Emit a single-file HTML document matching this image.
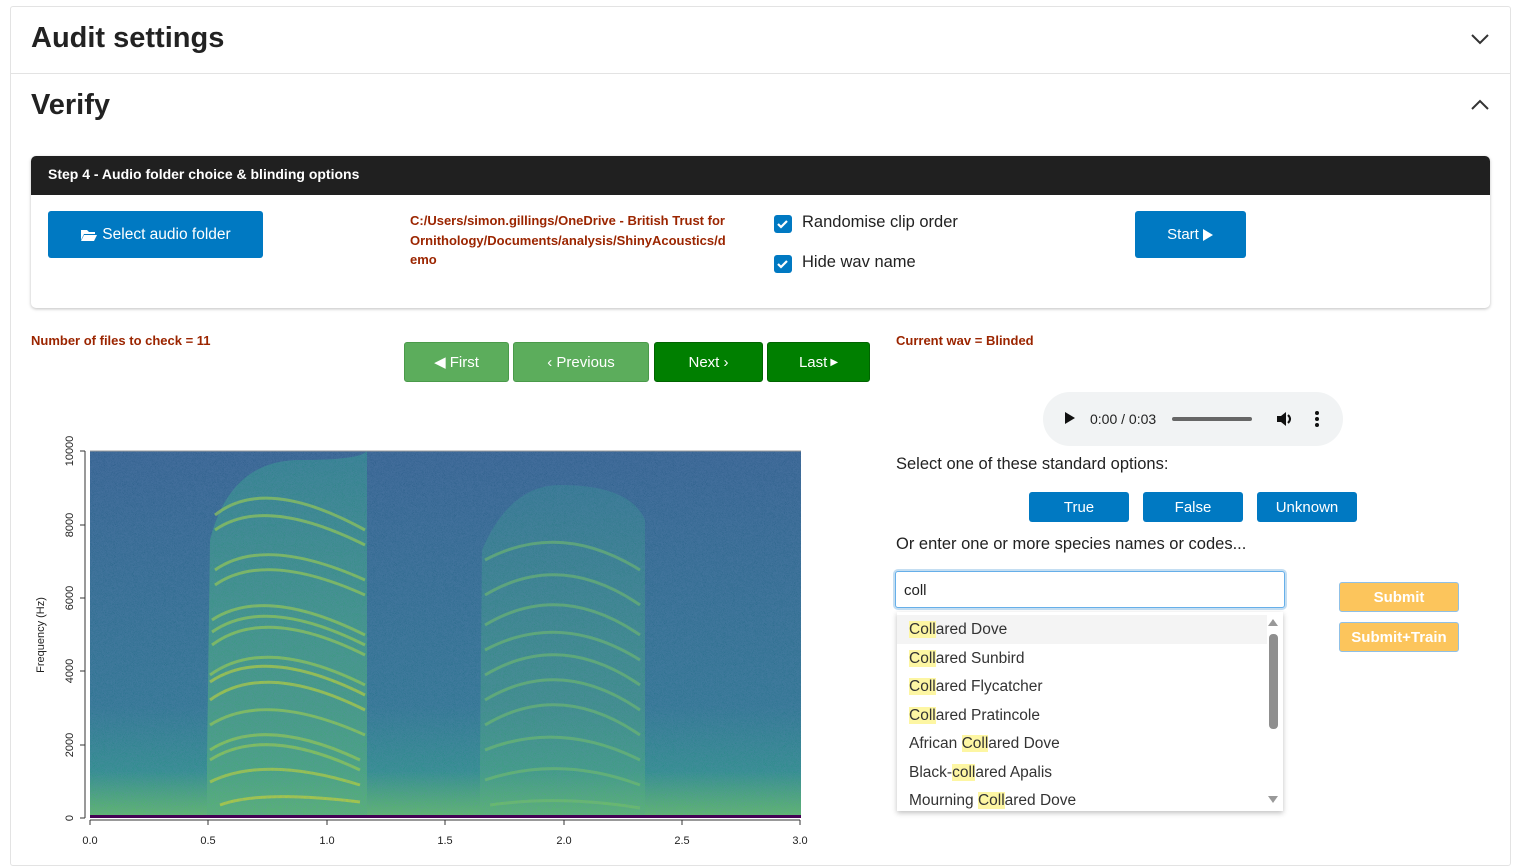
<!DOCTYPE html>
<html><head><meta charset="utf-8"><style>
*{box-sizing:border-box;margin:0;padding:0}
body{width:1518px;height:854px;overflow:hidden;background:#fff;font-family:"Liberation Sans",sans-serif;color:#222;position:relative}
.a{position:absolute}
.btn{position:absolute;color:#fff;display:flex;align-items:center;justify-content:center;font-size:15px;border-radius:3px}
.blue{background:#0079c2}
.g1{background:#5cad5c;border:1px solid #4a9a4a}
.g2{background:#007f00;border:1px solid #006400}
.red{color:#9b2500;font-weight:bold;font-size:13px}
.it{position:absolute;left:12px;font-size:15.5px;color:#333}
.hl{background:#fdf6a3}
.y{background:#fcc55c;border:1px solid #8fc0e6;font-weight:bold}
</style></head><body>
<div class="a" style="left:10px;top:6px;width:1501px;height:860px;border:1px solid #e3e3e3;border-radius:3px"></div>
<div class="a" style="left:31px;top:22px;font-size:29px;font-weight:bold;color:#222">Audit settings</div>
<svg class="a" style="left:1470px;top:32px" width="20" height="14"><path d="M2 3 L10 11 L18 3" stroke="#333" stroke-width="2" fill="none"/></svg>
<div class="a" style="left:11px;top:73px;width:1499px;height:1px;background:#e3e3e3"></div>
<div class="a" style="left:31px;top:89px;font-size:29px;font-weight:bold;color:#222">Verify</div>
<svg class="a" style="left:1470px;top:98px" width="20" height="14"><path d="M2 11 L10 3 L18 11" stroke="#333" stroke-width="2" fill="none"/></svg>

<div class="a" style="left:31px;top:156px;width:1459px;height:152px;border-radius:5px;box-shadow:0 1px 3px rgba(0,0,0,.25);background:#fff"></div>
<div class="a" style="left:31px;top:156px;width:1459px;height:39px;background:#202020;border-radius:5px 5px 0 0;color:#fff;font-weight:bold;font-size:14px;padding:10px 17px">Step 4 - Audio folder choice &amp; blinding options</div>
<div class="btn blue" style="left:48px;top:211px;width:215px;height:47px;font-size:15.5px">
<svg width="18" height="14" style="margin-right:4px"><path d="M1 2h6l2 2h6v2H4L1 12z M4 7h13l-3 6H1z" fill="#fff"/></svg>Select audio folder</div>
<div class="a red" style="left:410px;top:211px;width:345px;line-height:19.5px">C:/Users/simon.gillings/OneDrive - British Trust for Ornithology/Documents/analysis/ShinyAcoustics/d emo</div>
<div class="a" style="left:774px;top:215px;width:18px;height:18px;background:#0079c2;border-radius:3px"><svg width="18" height="18"><path d="M4 9l3 3 6-6" stroke="#fff" stroke-width="2.2" fill="none"/></svg></div>
<div class="a" style="left:802px;top:213px;font-size:16.5px">Randomise clip order</div>
<div class="a" style="left:774px;top:255px;width:18px;height:18px;background:#0079c2;border-radius:3px"><svg width="18" height="18"><path d="M4 9l3 3 6-6" stroke="#fff" stroke-width="2.2" fill="none"/></svg></div>
<div class="a" style="left:802px;top:253px;font-size:16.5px">Hide wav name</div>
<div class="btn blue" style="left:1135px;top:211px;width:111px;height:47px">Start <svg width="12" height="14" style="margin-left:3px"><path d="M1 1l10 6-10 6z" fill="#fff"/></svg></div>

<div class="a red" style="left:31px;top:333px">Number of files to check = 11</div>
<div class="btn g1" style="left:404px;top:342px;width:105px;height:40px">&#9664;&#xFE0E;&nbsp;First</div>
<div class="btn g1" style="left:513px;top:342px;width:136px;height:40px">&lsaquo; Previous</div>
<div class="btn g2" style="left:654px;top:342px;width:109px;height:40px">Next &rsaquo;</div>
<div class="btn g2" style="left:767px;top:342px;width:103px;height:40px">Last <span style="font-size:10px;margin-left:3px">&#9654;&#xFE0E;</span></div>
<div class="a red" style="left:896px;top:333px">Current wav = Blinded</div>

<svg class="a" style="left:0;top:420px" width="830" height="434">
<defs>
<linearGradient id="bg" x1="0" y1="0" x2="0" y2="1"><stop offset="0" stop-color="#2f5f8c"/><stop offset=".7" stop-color="#2a758e"/><stop offset=".88" stop-color="#2a9088"/><stop offset="1" stop-color="#5cbf60"/></linearGradient>
<linearGradient id="c1" x1="0" y1="0" x2="0" y2="1"><stop offset="0" stop-color="#2a8f8a"/><stop offset=".5" stop-color="#3fab7a"/><stop offset="1" stop-color="#52b86b"/></linearGradient>
<filter id="n" filterUnits="userSpaceOnUse" x="90" y="31" width="711" height="364"><feTurbulence baseFrequency=".9" numOctaves="1" seed="3"/><feColorMatrix values="0 0 0 0 .15 0 0 0 0 .25 0 0 0 0 .5 0 0 0 -1.2 .7"/></filter>
<clipPath id="cp"><rect x="90" y="31" width="711" height="364"/></clipPath>
</defs>
<g clip-path="url(#cp)">
<rect x="90" y="31" width="711" height="364" fill="url(#bg)"/>
<path d="M207 340 L210 120 Q230 40 300 40 Q360 40 367 31 L367 395 L207 395Z" fill="url(#c1)" opacity=".7"/>
<path d="M480 340 L482 130 Q510 65 560 65 Q630 65 645 100 L645 395 L480 395Z" fill="url(#c1)" opacity=".45"/>
<g fill="none" stroke="#9fd93a" stroke-width="3" opacity=".7">
<path d="M215 95 Q265 55 365 110"/><path d="M215 110 Q265 75 365 125"/><path d="M215 150 Q265 115 365 160"/><path d="M215 165 Q265 130 365 175"/>
<path d="M212 200 Q265 165 365 215"/><path d="M212 212 Q265 175 365 225"/><path d="M212 225 Q265 185 365 235"/><path d="M210 255 Q265 215 365 265"/>
<path d="M210 262 Q265 225 365 275" stroke="#c6e020"/><path d="M210 280 Q265 240 365 290" stroke="#c6e020"/><path d="M210 305 Q265 270 365 315"/>
<path d="M210 330 Q265 295 360 340"/><path d="M210 340 Q265 305 360 350"/><path d="M210 362 Q265 335 360 365" stroke="#c6e020"/>
<path d="M220 385 Q260 370 360 382" stroke="#d7e219"/>
</g>
<g fill="none" stroke="#7ad151" stroke-width="3" opacity=".55">
<path d="M485 140 Q560 100 640 150"/><path d="M485 175 Q560 130 640 185"/><path d="M485 205 Q560 160 640 215"/><path d="M485 230 Q560 190 640 240"/>
<path d="M485 255 Q560 210 640 265"/><path d="M485 280 Q560 235 640 290"/><path d="M485 305 Q560 260 640 315"/><path d="M485 330 Q560 300 640 340"/><path d="M485 360 Q560 335 640 365"/><path d="M490 385 Q560 375 640 388"/>
</g>
<rect x="90" y="31" width="711" height="364" filter="url(#n)" opacity=".5"/>
</g>
<rect x="90" y="395" width="711" height="3" fill="#440154"/>
<path d="M90 31 H801" stroke="#999"/>
<g stroke="#333"><path d="M90 400 H800"/><path d="M90 400v5M208 400v5M327 400v5M445 400v5M564 400v5M682 400v5M800 400v5"/>
<path d="M85 31 V398"/><path d="M80 398h5M80 325h5M80 251h5M80 178h5M80 105h5M80 31h5"/></g>
<g font-size="11" fill="#222" text-anchor="middle"><text x="90" y="424">0.0</text><text x="208" y="424">0.5</text><text x="327" y="424">1.0</text><text x="445" y="424">1.5</text><text x="564" y="424">2.0</text><text x="682" y="424">2.5</text><text x="800" y="424">3.0</text></g>
<g font-size="11" fill="#222" text-anchor="middle">
<text transform="translate(73,398) rotate(-90)">0</text><text transform="translate(73,325) rotate(-90)">2000</text><text transform="translate(73,251) rotate(-90)">4000</text><text transform="translate(73,178) rotate(-90)">6000</text><text transform="translate(73,105) rotate(-90)">8000</text><text transform="translate(73,31) rotate(-90)">10000</text>
<text transform="translate(44,215) rotate(-90)">Frequency (Hz)</text></g>
</svg>

<div class="a" style="left:1043px;top:392px;width:300px;height:54px;background:#f1f3f4;border-radius:27px"></div>
<svg class="a" style="left:1064px;top:411px" width="12" height="14"><path d="M1 1l10 6-10 6z" fill="#111"/></svg>
<div class="a" style="left:1090px;top:411px;font-size:14px;color:#222">0:00 / 0:03</div>
<div class="a" style="left:1172px;top:417px;width:80px;height:4px;background:#666;border-radius:2px"></div>
<svg class="a" style="left:1276px;top:411px" width="18" height="16"><path d="M1 5h4l5-4v14l-5-4H1z" fill="#111"/><path d="M12 4q4 4 0 8" stroke="#111" stroke-width="2" fill="none"/></svg>
<svg class="a" style="left:1313px;top:410px" width="8" height="18"><circle cx="4" cy="3" r="2" fill="#111"/><circle cx="4" cy="9" r="2" fill="#111"/><circle cx="4" cy="15" r="2" fill="#111"/></svg>

<div class="a" style="left:896px;top:455px;font-size:16.5px">Select one of these standard options:</div>
<div class="btn blue" style="left:1029px;top:492px;width:100px;height:30px">True</div>
<div class="btn blue" style="left:1143px;top:492px;width:100px;height:30px">False</div>
<div class="btn blue" style="left:1257px;top:492px;width:100px;height:30px">Unknown</div>
<div class="a" style="left:896px;top:535px;font-size:16.5px">Or enter one or more species names or codes...</div>
<div class="a" style="left:895px;top:571px;width:390px;height:37px;border:1px solid #66afe9;box-shadow:0 0 0 2px #c4def2;border-radius:3px;background:#fff;font-size:15px;padding:10px 8px">coll</div>
<div class="a" style="left:897px;top:612px;width:386px;height:199px;background:#fff;box-shadow:0 2px 5px rgba(0,0,0,.25);overflow:hidden">
<div class="a" style="left:0;top:3px;width:370px;height:29px;background:#f4f4f4"></div>
<div class="it" style="top:9px"><span class="hl">Coll</span>ared Dove</div>
<div class="it" style="top:38px"><span class="hl">Coll</span>ared Sunbird</div>
<div class="it" style="top:66px"><span class="hl">Coll</span>ared Flycatcher</div>
<div class="it" style="top:95px"><span class="hl">Coll</span>ared Pratincole</div>
<div class="it" style="top:123px">African <span class="hl">Coll</span>ared Dove</div>
<div class="it" style="top:152px">Black-<span class="hl">coll</span>ared Apalis</div>
<div class="it" style="top:180px">Mourning <span class="hl">Coll</span>ared Dove</div>
<svg class="a" style="left:369px;top:4px" width="14" height="192"><path d="M2 10l5-7 5 7z" fill="#999"/><rect x="3" y="18" width="9" height="95" rx="4" fill="#8f8f8f"/><path d="M2 180l5 7 5-7z" fill="#999"/></svg>
</div>
<div class="btn y" style="left:1339px;top:582px;width:120px;height:30px">Submit</div>
<div class="btn y" style="left:1339px;top:622px;width:120px;height:30px">Submit+Train</div>
</body></html>
